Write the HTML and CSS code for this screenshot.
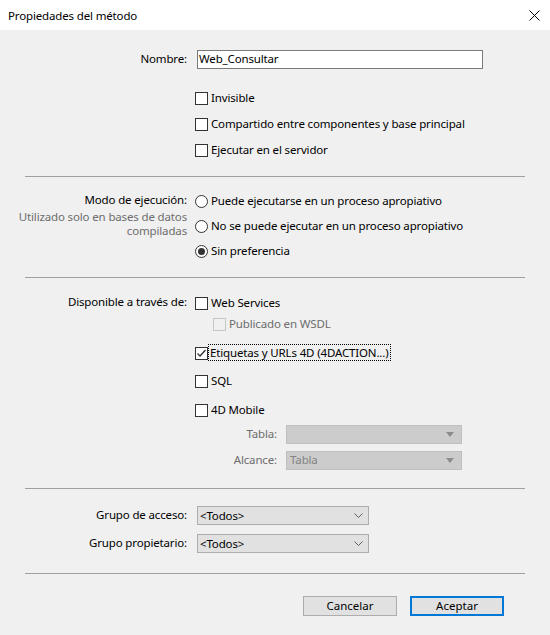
FILE: index.html
```html
<!DOCTYPE html>
<html lang="es">
<head>
<meta charset="utf-8">
<title>Propiedades del método</title>
<link rel="stylesheet" href="styles.css">
</head>
<body>
<div class="window">
  <div class="titlebar">
    <span class="title">Propiedades del método</span>
    <svg class="close" width="11" height="11" viewBox="0 0 11 11"><path d="M0.5 0.5 L10.5 10.5 M10.5 0.5 L0.5 10.5" stroke="#000" stroke-width="1" fill="none"/></svg>
  </div>
  <div class="content">
    <section class="sec sec-a">
      <div class="label lbl-name">Nombre:</div>
      <div class="ctl">
        <div class="textbox">Web_Consultar</div>
        <div class="opts opts-a">
          <div class="opt"><span class="cb"></span><span class="txt">Invisible</span></div>
          <div class="opt"><span class="cb"></span><span class="txt">Compartido entre componentes y base principal</span></div>
          <div class="opt"><span class="cb"></span><span class="txt">Ejecutar en el servidor</span></div>
        </div>
      </div>
    </section>
    <hr class="sep">
    <section class="sec sec-b">
      <div class="label">
        <div class="lbl-row">Modo de ejecución:</div>
        <div class="note"><div class="note-line">Utilizado solo en bases de datos</div><div class="note-line">compiladas</div></div>
      </div>
      <div class="opts opts-b">
        <div class="opt"><span class="rb"></span><span class="txt">Puede ejecutarse en un proceso apropiativo</span></div>
        <div class="opt"><span class="rb"></span><span class="txt">No se puede ejecutar en un proceso apropiativo</span></div>
        <div class="opt"><span class="rb on"></span><span class="txt">Sin preferencia</span></div>
      </div>
    </section>
    <hr class="sep">
    <section class="sec sec-c">
      <div class="label"><div class="lbl-row">Disponible a través de:</div></div>
      <div class="opts opts-c">
        <div class="opt"><span class="cb"></span><span class="txt">Web Services</span></div>
        <div class="opt sub disabled"><span class="cb"></span><span class="txt">Publicado en WSDL</span></div>
        <div class="opt gap9"><span class="cb"><svg width="13" height="13" viewBox="0 0 13 13"><path d="M2.5 6.5 L5 9 L10.5 3" stroke="#333" stroke-width="1.3" fill="none"/></svg></span><span class="txt focus">Etiquetas y URLs 4D (4DACTION...)</span></div>
        <div class="opt gap8"><span class="cb"></span><span class="txt">SQL</span></div>
        <div class="opt gap9"><span class="cb"></span><span class="txt">4D Mobile</span></div>
        <div class="field gap4">
          <span class="flabel">Tabla:</span>
          <div class="dd"><span></span><svg width="8" height="5" viewBox="0 0 8 5"><path d="M0 0 H8 L4 5 Z" fill="#8c8c8c"/></svg></div>
        </div>
        <div class="field gap6">
          <span class="flabel">Alcance:</span>
          <div class="dd"><span>Tabla</span><svg width="8" height="5" viewBox="0 0 8 5"><path d="M0 0 H8 L4 5 Z" fill="#8c8c8c"/></svg></div>
        </div>
      </div>
    </section>
    <hr class="sep">
    <section class="sec sec-d">
      <div class="label col-labels">
        <div class="lbl-combo">Grupo de acceso:</div>
        <div class="lbl-combo">Grupo propietario:</div>
      </div>
      <div class="combos">
        <div class="combo"><span>&lt;Todos&gt;</span><svg width="9" height="5" viewBox="0 0 9 5"><path d="M0.5 0.5 L4.5 4.5 L8.5 0.5" stroke="#5f5f5f" stroke-width="1" fill="none"/></svg></div>
        <div class="combo"><span>&lt;Todos&gt;</span><svg width="9" height="5" viewBox="0 0 9 5"><path d="M0.5 0.5 L4.5 4.5 L8.5 0.5" stroke="#5f5f5f" stroke-width="1" fill="none"/></svg></div>
      </div>
    </section>
    <hr class="sep">
    <footer class="buttons">
      <button class="btn">Cancelar</button>
      <button class="btn default">Aceptar</button>
    </footer>
  </div>
</div>
</body>
</html>
```

FILE: styles.css
```css
* { box-sizing: border-box; }
html, body { margin: 0; padding: 0; }
body {
  width: 550px;
  height: 635px;
  overflow: hidden;
  font-family: "Noto Sans", "Open Sans", sans-serif;
  font-size: 11.5px;
  letter-spacing: -0.15px;
  color: #000;
  background: #f0f0f0;
}
.window { width: 550px; height: 635px; display: flex; flex-direction: column; }
.titlebar {
  height: 30px;
  background: #fff;
  display: flex;
  align-items: center;
  justify-content: space-between;
  padding: 0 10px 0 8px;
  flex: none;
}
.close { display: block; }
.content { flex: 1; background: #f0f0f0; }

.sep {
  margin: 0 25px;
  border: 0;
  height: 1px;
  background: #a0a0a0;
}

.sec {
  display: grid;
  grid-template-columns: 187px 1fr;
  column-gap: 8px;
  align-items: start;
}
.label { text-align: right; white-space: nowrap; }

.sec-a { padding: 20px 0 16px; }
.lbl-name { line-height: 18px; height: 19px; }
.textbox {
  margin-left: 2px;
  width: 286px;
  height: 19px;
  border: 1px solid #7a7a7a;
  background: #fff;
  line-height: 16px;
  padding-left: 1px;
  white-space: nowrap;
}
.opts { display: flex; flex-direction: column; }
.opts-a { margin-top: 19px; gap: 6px; }
.opt {
  height: 20px;
  display: flex;
  align-items: center;
  white-space: nowrap;
}
.cb, .rb {
  flex: none;
  width: 13px;
  height: 13px;
  border: 1px solid #333;
  background: #fff;
  margin-right: 2px;
  display: flex;
  align-items: center;
  justify-content: center;
}
.cb svg { display: block; margin: -1px; }
.rb { border-radius: 50%; }
.rb.on::after {
  content: "";
  width: 7px;
  height: 7px;
  border-radius: 50%;
  background: #333;
}
.txt { border: 1px solid transparent; line-height: 15px; margin-bottom: 2px; }
.txt.focus { border: 1px dotted #000; margin-left: -2px; padding-left: 1px; padding-right: 1px; }
.opt.sub { margin-left: 18px; margin-top: 1px; }
.opt.disabled .cb { border-color: #c5c5c5; background: #f0f0f0; }
.opt.disabled .txt { color: #6d6d6d; }
.gap9 { margin-top: 9px; }
.gap8 { margin-top: 8px; }
.gap4 { margin-top: 4px; }
.gap6 { margin-top: 6px; }

.sec-b { padding: 14px 0 16px; }
.lbl-row { height: 20px; line-height: 18px; }
.note { color: #6d6d6d; margin-top: -1px; }
.note-line { height: 14px; line-height: 13px; }
.opts-b { gap: 5px; }

.sec-c { padding: 15px 0 18px; }
.field {
  height: 20px;
  display: flex;
  align-items: center;
}
.flabel {
  width: 82px;
  text-align: right;
  color: #6d6d6d;
  margin-right: 9px;
  line-height: 15px;
  margin-bottom: 2px;
}
.dd {
  width: 176px;
  height: 19px;
  background: #cccccc;
  border: 1px solid #bfbfbf;
  display: flex;
  align-items: center;
  justify-content: space-between;
  padding: 0 7px 1px 3px;
  color: #838383;
}
.dd svg { display: block; margin-top: 1px; }

.sec-d { padding: 17px 0 20px; }
.col-labels, .combos { display: flex; flex-direction: column; gap: 9px; }
.lbl-combo { height: 19px; line-height: 18px; }
.combo {
  margin-left: 2px;
  width: 172px;
  height: 19px;
  background: #e1e1e1;
  border: 1px solid #adadad;
  display: flex;
  align-items: center;
  justify-content: space-between;
  padding: 0 5px 1px 2px;
}
.combo svg { display: block; margin-top: 1px; }

.buttons {
  display: flex;
  justify-content: flex-end;
  gap: 13px;
  padding: 22px 46px 0 0;
}
.btn {
  width: 94px;
  height: 20px;
  font: inherit;
  color: #000;
  background: #e1e1e1;
  border: 1px solid #adadad;
  padding: 0 0 1px;
  line-height: 16px;
}
.btn.default { border: 2px solid #0078d7; }
```
